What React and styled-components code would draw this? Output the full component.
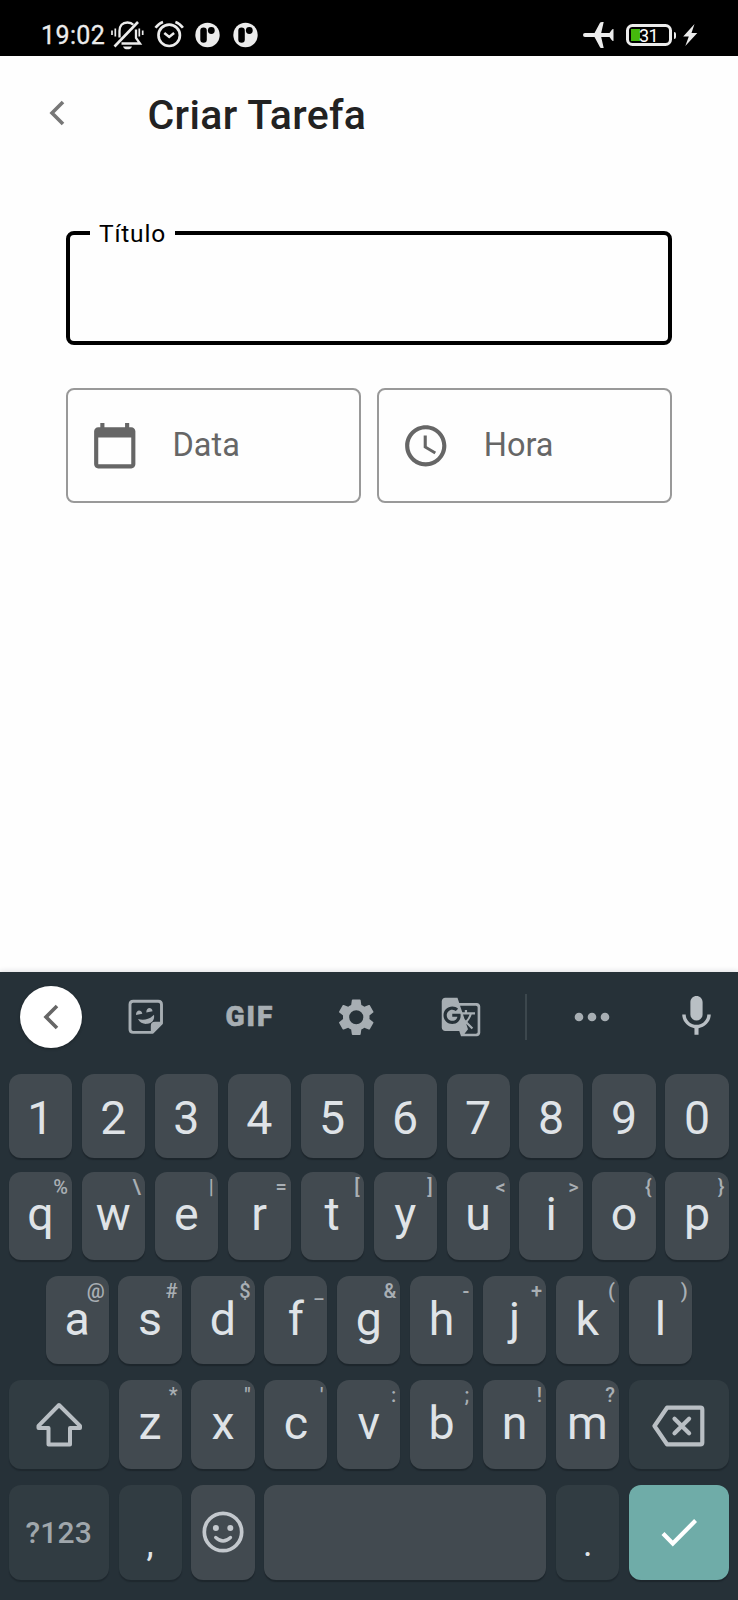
import React from "react";
import styled, { createGlobalStyle } from "styled-components";
import { MdGTranslate, MdMoreHoriz, MdCalendarToday, MdAccessTime } from "react-icons/md";

const GlobalStyle = createGlobalStyle`
  * { box-sizing: border-box; }
  body { margin: 0; background: #fff; font-family: Roboto, "Liberation Sans", sans-serif; }
  svg { display: block; flex: none; }
`;

const Screen = styled.div`
  width: 738px;
  height: 1600px;
  display: flex;
  flex-direction: column;
  overflow: hidden;
  background: #fefefe;
`;

const StatusBar = styled.header`
  height: 55.5px;
  flex: none;
  display: flex;
  justify-content: space-between;
  padding: 15px 40px 0 41px;
  background: #000;
  color: #ececec;
`;

const StatusGroup = styled.div`
  display: flex;
  height: 40px;
  align-items: center;
`;

const StatusIcons = styled.div`
  display: flex;
  gap: 12.5px;
  margin-left: 8px;
`;

const Clock = styled.span`
  width: 69px;
  font-size: 25px;
  font-weight: 400;
  letter-spacing: 0.4px;
  line-height: 40px;
  padding-top: 2px;
  -webkit-text-stroke: 0.3px #ececec;
`;

const Battery = styled.div`
  display: flex;
  align-items: center;
  margin-left: 12px;
`;

const BatteryShell = styled.div`
  width: 46px;
  height: 22px;
  border: 3px solid #ececec;
  border-radius: 6.5px;
  display: flex;
  align-items: center;
  padding-left: 2.5px;
  background: linear-gradient(#45b80d, #45b80d) 2.5px center / 9px 12px no-repeat;
  font-size: 18px;
  font-weight: 400;
  line-height: 16px;
  color: #fff;
`;

const BatteryLevel = styled.span`
  padding: 1px 0 0 8px;
  letter-spacing: -0.6px;
`;

const BatteryTip = styled.div`
  width: 2.5px;
  height: 7px;
  margin: 0 7px 0 2px;
  border-radius: 0 2px 2px 0;
  background: #ececec;
`;

const AppArea = styled.main`
  flex: 1;
`;

const AppBar = styled.div`
  height: 118px;
  display: flex;
  align-items: center;
  padding-left: 49px;
  gap: 82.5px;
`;

const Title = styled.h1`
  margin: 0;
  font-size: 41px;
  font-weight: 500;
  letter-spacing: 0.35px;
  line-height: 48px;
  padding-top: 1px;
  color: #222;
`;

const Form = styled.form`
  padding: 41px 66px 0 66px;
  display: flex;
  flex-direction: column;
  gap: 43.5px;
`;

const TitleField = styled.fieldset`
  margin: 0;
  height: 130px;
  border: 4px solid #000;
  border-radius: 8px;
  padding: 0 20px;
`;

const Legend = styled.legend`
  height: 36px;
  padding: 0 9px 0 9px;
  font-size: 24.5px;
  line-height: 38px;
  letter-spacing: 0.8px;
  color: #000;
`;

const PickerRow = styled.div`
  display: flex;
  gap: 16.5px;
`;

const Picker = styled.button`
  flex: 1;
  height: 114.5px;
  display: flex;
  align-items: center;
  gap: 33px;
  padding: 0 0 0 22px;
  border: 2px solid #999;
  border-radius: 8px;
  background: transparent;
  font-family: inherit;
  font-size: 32.5px;
  letter-spacing: 0;
  color: #666;
`;

const Keyboard = styled.section`
  height: 628px;
  flex: none;
  background: #263138;
  box-shadow: 0 -1px 5px rgba(30, 30, 60, 0.14);
`;

const Toolbar = styled.div`
  height: 90px;
  display: grid;
  grid-template-columns: 102.6px 87.6px 119.4px 92.4px 118px 12px 120px 90px;
  align-items: center;
  justify-items: center;
  color: #a7aeb3;
`;

const CollapseButton = styled.div`
  width: 62px;
  height: 62px;
  display: grid;
  place-items: center;
  border-radius: 50%;
  background: #fff;
  color: #666;
  box-shadow: 0 1px 3px rgba(0, 0, 0, 0.3);
`;

const GifLabel = styled.span`
  font-size: 28px;
  font-weight: 900;
  letter-spacing: 2px;
  line-height: 30px;
  -webkit-text-stroke: 0.6px #a7aeb3;
`;

const Divider = styled.div`
  width: 2px;
  height: 46px;
  background: #3c474d;
`;

const Keys = styled.div`
  display: flex;
  flex-direction: column;
  padding-top: 12px;
`;

const KeyRow = styled.div`
  height: ${(p) => p.$height}px;
  margin-bottom: ${(p) => p.$after || 0}px;
  padding: 0 9px 0 ${(p) => p.$inset || 8.8}px;
  display: flex;
  gap: ${(p) => p.$gap || 9.75}px;
`;

const tones = {
  plain: ["#424a50", "#dfe3e7"],
  dark: ["#313c42", "#b9bfc4"],
  accent: ["#6faca8", "#ffffff"],
};

const KeyCap = styled.div`
  position: relative;
  flex: ${(p) => (p.$wide ? "0 0 100px" : p.$space ? "1 1 0" : "0 0 63.15px")};
  display: flex;
  align-items: center;
  justify-content: center;
  padding-top: ${(p) => p.$drop || 0}px;
  padding-bottom: ${(p) => p.$lift || 0}px;
  border-radius: 12px;
  background: ${(p) => tones[p.$tone || "plain"][0]};
  color: ${(p) => tones[p.$tone || "plain"][1]};
  box-shadow: 0 2px 1px ${(p) => (p.$tone === "dark" ? "rgba(20,28,33,.4)" : "#1d262c")};
  font-size: 46.5px;
  line-height: 40px;
`;

const Hint = styled.span`
  position: absolute;
  top: 6px;
  right: 4px;
  font-size: 20px;
  font-weight: 500;
  line-height: 18px;
  color: #a9afb4;
`;

const SymbolLabel = styled.span`
  font-size: 30px;
  font-weight: 500;
  letter-spacing: 0.2px;
  padding-top: 2px;
  color: #a0a7ac;
`;

const Punctuation = styled.span`
  font-size: 36px;
  color: #dfe3e7;
`;

const Chevron = () => (
  <svg width="16" height="26" viewBox="0 0 16 26" fill="none" stroke="currentColor" strokeWidth="3.6">
    <path d="M14 2 3 13l11 11" />
  </svg>
);

const BackButton = styled.div`
  color: #777;
  padding-bottom: 4px;
`;

const SilentBell = () => (
  <svg width="35" height="32" viewBox="110 20 35 32" fill="none" stroke="currentColor" strokeWidth="2.3">
    <path d="M119.500 38.500V32c0-5 2.700-8.500 8-8.500 2.600 0 4.500.8 5.800 2.300M136 30.500V39l4 5.500h-18.500" />
    <path d="m114.500 47.500 23.500-24.500" strokeWidth="2.600" />
    <path d="M123 47.500h9c-.8 2-2 2.800-4.500 2.800s-3.700-.8-4.500-2.800z" fill="currentColor" stroke="none" />
    <path d="M112 31.500v4.500M115.300 29.500v8M139.300 29.500v8M142.700 31.500v4.500" strokeWidth="1.700" />
  </svg>
);

const AlarmIcon = () => (
  <svg width="29.500" height="32" viewBox="153 20 29.500 32" overflow="visible" fill="none" stroke="currentColor" strokeWidth="2.700">
    <circle cx="169.200" cy="36.300" r="10.700" />
    <path d="m164.300 34 4.900 4 4.900-4" strokeWidth="2.500" />
    <path d="M155.500 28.800q3-4.300 7.500-5.800M182.900 28.800q-3-4.300-7.500-5.800" strokeWidth="2.600" />
  </svg>
);

const DiscIcon = () => (
  <svg width="25" height="32" viewBox="195 18.500 25 32">
    <circle cx="207.500" cy="34.500" r="12.200" fill="currentColor" />
    <rect x="200.300" y="27" width="6.500" height="15.300" rx="3.200" fill="#000" />
    <circle cx="211.300" cy="30" r="3.400" fill="#000" />
  </svg>
);

const PlaneIcon = () => (
  <svg width="31" height="28" viewBox="583 21 31 28" fill="currentColor">
    <path d="M583 35q0-1.900 2-1.900h9.500l5.500-10.300q.5-.9 2.200-.9h1.500l-2.500 11.200h8.300l2.200-3.200q.4-.9 1.800-.9v12q-1.400 0-1.800-.9l-2.200-3.200h-8.300l2.500 11.200h-1.500q-1.700 0-2.200-.9l-5.500-10.300H585q-2 0-2-1.900z" />
  </svg>
);

const BoltIcon = () => (
  <svg width="15" height="22" viewBox="683 24 15 22" fill="currentColor">
    <path d="M694.500 24 683.200 36.500h5.600l-3.500 9.500L697.300 33h-5.800z" />
  </svg>
);

const StickerIcon = () => (
  <svg width="36" height="36" viewBox="128.500 999 36 36" fill="none" stroke="currentColor" strokeWidth="2.900">
    <path d="M133.700 1001.300h25q3.300 0 3.300 3.300v18.600l-9.200 9.200h-19.100q-3.200 0-3.200-3.200v-24.600q0-3.300 3.200-3.300z" strokeLinejoin="round" />
    <path d="M151.300 1033.500v-7.500q0-4.200 4.200-4.200h7.500z" fill="currentColor" stroke="none" />
    <g fill="currentColor" stroke="none">
      <path d="M138.500 1019c5.500 1.700 11.500.5 16-4.200.8 4.800-2 8.300-6.500 9-4 .6-7.500-1-9.500-4.800z" />
      <path d="M136.500 1015c-.2-5.500 5.300-6.200 6.300-1.300z" />
      <path d="M146.800 1012.500c-.2-5.500 5.300-6.200 6.300-1.300z" />
    </g>
  </svg>
);

const GearIcon = () => (
  <svg width="42.500" height="42.500" viewBox="0 0 24 24" fill="currentColor" fillRule="evenodd">
    <path d="M19.430 12.980c.04-.32.07-.64.07-.98s-.03-.66-.07-.98l2.110-1.650c.19-.15.24-.42.12-.64l-2-3.460c-.12-.22-.39-.3-.61-.22l-2.490 1c-.52-.4-1.080-.73-1.690-.98l-.38-2.650C14.460 2.180 14.250 2 14 2h-4c-.25 0-.46.18-.49.42l-.38 2.650c-.61.25-1.170.59-1.690.98l-2.490-1c-.23-.09-.49 0-.61.22l-2 3.460c-.13.22-.07.49.12.64l2.110 1.650c-.04.32-.07.65-.07.98s.03.66.07.98l-2.110 1.650c-.19.15-.24.42-.12.64l2 3.460c.12.22.39.3.61.22l2.490-1c.52.4 1.080.73 1.690.98l.38 2.650c.03.24.24.42.49.42h4c.25 0 .46-.18.49-.42l.38-2.650c.61-.25 1.170-.59 1.690-.98l2.490 1c.23.09.49 0 .61-.22l2-3.460c.12-.22.07-.49-.12-.64l-2.110-1.650zM12 16a4 4 0 1 1 0-8 4 4 0 0 1 0 8z" />
  </svg>
);

const MicIcon = () => (
  <svg width="49" height="54" viewBox="0 0 24 26.500" fill="#b9bfc4">
    <path d="M12 15c1.660 0 2.990-1.340 2.990-3L15 6c0-1.660-1.340-3-3-3S9 4.340 9 6v6c0 1.660 1.340 3 3 3zm5.300-3c0 3-2.540 5.100-5.300 5.100S6.700 15 6.700 12H5c0 3.420 2.720 6.230 6 6.720V22h2v-3.280c3.280-.48 6-3.300 6-6.720h-1.700z" />
  </svg>
);

const ShiftIcon = () => (
  <svg width="48" height="46" viewBox="34.500 1401 48 46" fill="none" stroke="currentColor" strokeWidth="4" strokeLinejoin="round">
    <path d="M58.500 1404 38 1424.800v2.200h10v16.400h21.500v-16.400h10v-2.200z" />
  </svg>
);

const BackspaceIcon = () => (
  <svg width="54" height="44" viewBox="651.500 1404.500 54 44" fill="none" stroke="currentColor" strokeWidth="4.200" strokeLinejoin="round">
    <path d="M666.500 1408.200h33.500q1.800 0 1.800 1.800v33q0 1.800-1.800 1.800h-33.500l-12.500-18.300z" />
    <path d="m674 1419.200 14.600 14.600m0-14.600L674 1433.800" strokeLinecap="round" />
  </svg>
);

const SmileIcon = () => (
  <svg width="44" height="44" viewBox="200 1510.500 44 44" fill="none" stroke="#c3c8cd" strokeWidth="3.700">
    <circle cx="222" cy="1532.500" r="18.700" />
    <circle cx="214.900" cy="1528.500" r="3" fill="#c3c8cd" stroke="none" />
    <circle cx="229.300" cy="1528.500" r="3" fill="#c3c8cd" stroke="none" />
    <path d="M214.700 1538q7.300 7 14.800 0" strokeWidth="3.300" strokeLinecap="round" />
  </svg>
);

const CheckIcon = () => (
  <svg width="36" height="30" viewBox="661 1518 36 30" fill="none" stroke="currentColor" strokeWidth="4.200">
    <path d="m663 1533.500 9.800 10 22.800-23" />
  </svg>
);

const Letter = ({ label, hint }) => (
  <KeyCap $lift={3}>
    {label}
    <Hint>{hint}</Hint>
  </KeyCap>
);

const topRow = [["q", "%"], ["w", "\\"], ["e", "|"], ["r", "="], ["t", "["], ["y", "]"], ["u", "<"], ["i", ">"], ["o", "{"], ["p", "}"]];
const homeRow = [["a", "@"], ["s", "#"], ["d", "$"], ["f", "_"], ["g", "&"], ["h", "-"], ["j", "+"], ["k", "("], ["l", ")"]];
const lowRow = [["z", "*"], ["x", '"'], ["c", "'"], ["v", ":"], ["b", ";"], ["n", "!"], ["m", "?"]];

const letters = (row) => row.map(([label, hint]) => <Letter key={label} label={label} hint={hint} />);

export default function App() {
  return (
    <Screen>
      <GlobalStyle />
      <StatusBar>
        <StatusGroup>
          <Clock>19:02</Clock>
          <SilentBell />
          <StatusIcons>
            <AlarmIcon />
            <DiscIcon />
            <DiscIcon />
          </StatusIcons>
        </StatusGroup>
        <StatusGroup>
          <PlaneIcon />
          <Battery>
            <BatteryShell>
              <BatteryLevel>31</BatteryLevel>
            </BatteryShell>
            <BatteryTip />
            <BoltIcon />
          </Battery>
        </StatusGroup>
      </StatusBar>

      <AppArea>
        <AppBar>
          <BackButton>
            <Chevron />
          </BackButton>
          <Title>Criar Tarefa</Title>
        </AppBar>
        <Form>
          <TitleField>
            <Legend>Título</Legend>
          </TitleField>
          <PickerRow>
            <Picker type="button">
              <MdCalendarToday size={49.500} />
              Data
            </Picker>
            <Picker type="button">
              <MdAccessTime size={49.500} />
              Hora
            </Picker>
          </PickerRow>
        </Form>
      </AppArea>

      <Keyboard>
        <Toolbar>
          <CollapseButton>
            <Chevron />
          </CollapseButton>
          <StickerIcon />
          <GifLabel>GIF</GifLabel>
          <GearIcon />
          <MdGTranslate size={42} />
          <Divider />
          <MdMoreHoriz size={52} />
          <MicIcon />
        </Toolbar>
        <Keys>
          <KeyRow $height={84} $after={14} $gap={9.820}>
            {[..."1234567890"].map((digit) => (
              <KeyCap key={digit} $drop={4}>{digit}</KeyCap>
            ))}
          </KeyRow>
          <KeyRow $height={87.500} $after={16.500} $gap={9.820}>{letters(topRow)}</KeyRow>
          <KeyRow $height={88} $after={16} $inset={45.600}>{letters(homeRow)}</KeyRow>
          <KeyRow $height={89} $after={16}>
            <KeyCap $wide $tone="dark"><ShiftIcon /></KeyCap>
            {letters(lowRow)}
            <KeyCap $wide $tone="dark" $drop={3}><BackspaceIcon /></KeyCap>
          </KeyRow>
          <KeyRow $height={94.500}>
            <KeyCap $wide $tone="dark"><SymbolLabel>?123</SymbolLabel></KeyCap>
            <KeyCap $tone="dark" $drop={24}><Punctuation>,</Punctuation></KeyCap>
            <KeyCap><SmileIcon /></KeyCap>
            <KeyCap $space />
            <KeyCap $tone="dark" $drop={24}><Punctuation>.</Punctuation></KeyCap>
            <KeyCap $wide $tone="accent" $drop={2}><CheckIcon /></KeyCap>
          </KeyRow>
        </Keys>
      </Keyboard>
    </Screen>
  );
}
